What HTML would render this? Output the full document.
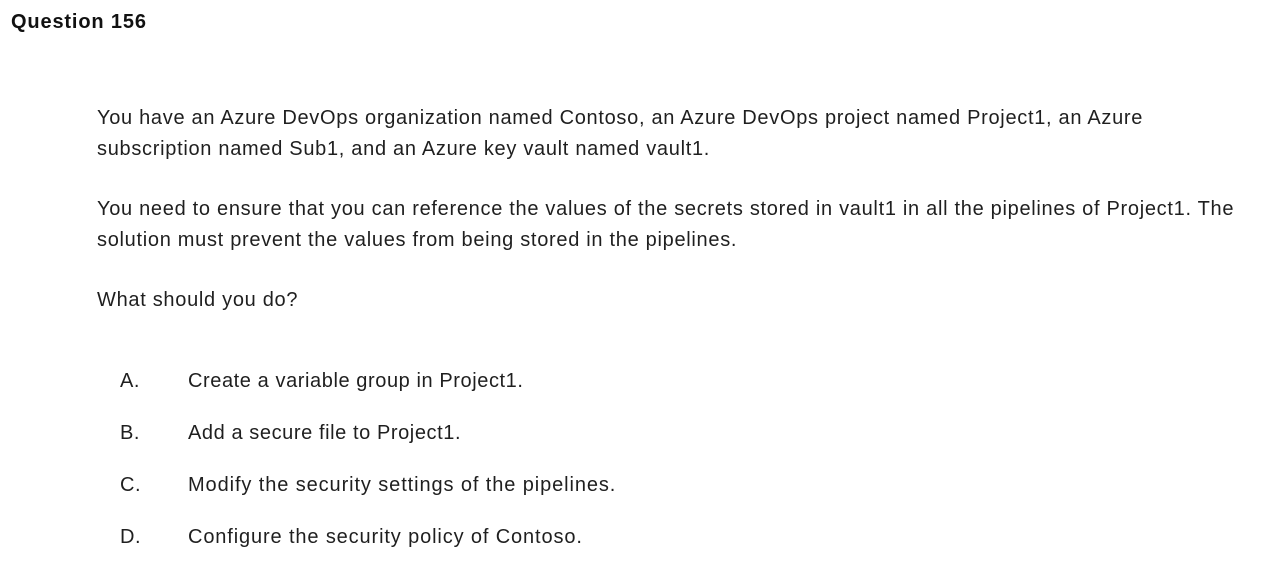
<!DOCTYPE html>
<html><head><meta charset="utf-8"><style>
body{margin:0;width:1264px;height:578px;background:#fff;font-family:"Liberation Sans",sans-serif;color:#1f1f1f;position:relative;overflow:hidden}
.t{position:absolute;left:11px;top:11px;font-size:20px;font-weight:bold;color:#111;letter-spacing:0.85px}
p{position:absolute;left:97px;margin:0;font-size:20px;line-height:31px;letter-spacing:0.7px;white-space:nowrap}
.o{position:absolute;font-size:20px;letter-spacing:0.58px;white-space:nowrap}
</style></head><body>
<div class="t">Question 156</div>
<p style="top:103px">You have an Azure DevOps organization named Contoso, an Azure DevOps project named Project1, an Azure<br>subscription named Sub1, and an Azure key vault named vault1.</p>
<p style="top:194px">You need to ensure that you can reference the values of the secrets stored in vault1 in all the pipelines of Project1. The<br>solution must prevent the values from being stored in the pipelines.</p>
<p style="top:285px">What should you do?</p>
<div class="o" style="left:120px;top:370px">A.</div><div class="o" style="left:188px;top:370px">Create a variable group in Project1.</div>
<div class="o" style="left:120px;top:422px">B.</div><div class="o" style="left:188px;top:422px">Add a secure file to Project1.</div>
<div class="o" style="left:120px;top:474px">C.</div><div class="o" style="left:188px;top:474px;letter-spacing:0.9px">Modify the security settings of the pipelines.</div>
<div class="o" style="left:120px;top:526px">D.</div><div class="o" style="left:188px;top:526px;letter-spacing:0.87px">Configure the security policy of Contoso.</div>
</body></html>
